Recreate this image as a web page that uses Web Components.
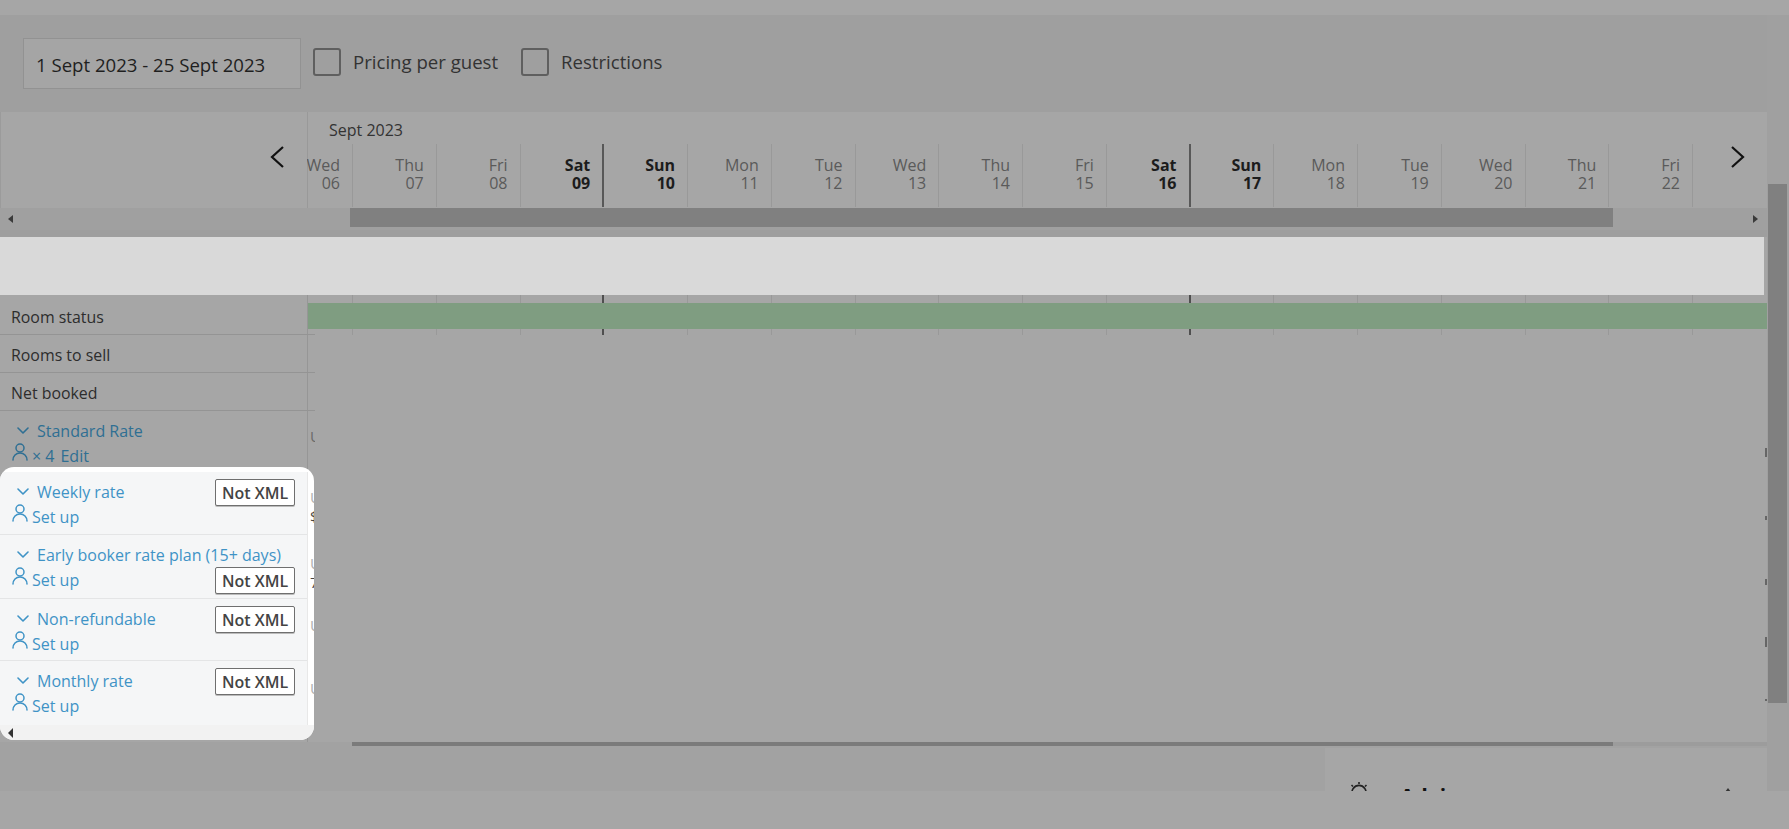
<!DOCTYPE html>
<html lang="en">
<head>
<meta charset="utf-8">
<title>Rates calendar</title>
<style>
  html, body { margin: 0; background: #a6a6a6; }
  body { font-family: "Open Sans", "Liberation Sans", sans-serif; overflow: hidden; }
</style>
</head>
<body>
<rate-page></rate-page>

<script>
// shared column track for everything that lines up with the days
const DAY_TRACK = '46px repeat(16, 83.75px)';
const DAYS = [
  ['Wed','06'],['Thu','07'],['Fri','08'],['Sat','09',1],['Sun','10',1],['Mon','11'],['Tue','12'],
  ['Wed','13'],['Thu','14'],['Fri','15'],['Sat','16',1],['Sun','17',1],['Mon','18'],['Tue','19'],
  ['Wed','20'],['Thu','21'],['Fri','22']
];

const PERSON = `<svg width="16" height="18" viewBox="0 0 16 18" fill="none" stroke="currentColor" stroke-width="1.5" stroke-linecap="round">
  <circle cx="8" cy="5" r="4"/><path d="M1 17c0-4 3-7 7-7s7 3 7 7"/></svg>`;
const CHEVRON = `<svg width="12" height="7" viewBox="0 0 12 7" fill="none" stroke="currentColor" stroke-width="1.6" stroke-linecap="round" stroke-linejoin="round"><path d="M1 1l5 5 5-5"/></svg>`;

class Shadowed extends HTMLElement {
  render(html) {
    this.attachShadow({mode: 'open'}).innerHTML = html;
  }
}

class CalToolbar extends Shadowed {
  constructor() {
    super();
    this.render(`
    <style>
      :host { display: flex; align-items: center; height: 97px; background: #9f9f9f; padding-left: 23px; box-sizing: border-box; color: #2f2f2f; font-size: 18.6px; }
      #range { width: 278px; height: 51px; box-sizing: border-box; border: 1px solid #929292; background: #a5a5a5; display: flex; align-items: center; padding: 2px 0 0 12px; margin-right: 12px; color: #1f1f1f; margin-top: -1px; white-space: nowrap; }
      .check { width: 28px; height: 28px; box-sizing: border-box; border: 2px solid #5f5f5f; border-radius: 3px; margin: -3px 12px 0 0; }
      .label { margin: -4px 23px 0 0; color: #333; white-space: nowrap; }
    </style>
    <div id="range">1 Sept 2023 - 25 Sept 2023</div>
    <div class="check"></div><div class="label">Pricing per guest</div>
    <div class="check"></div><div class="label">Restrictions</div>`);
  }
}

class HScroll extends Shadowed {
  constructor() {
    super();
    this.render(`
    <style>
      :host { display: flex; height: 22px; background: #a0a0a0; align-items: flex-start; }
      #left { width: 350px; height: 22px; box-sizing: border-box; padding: 7px 0 0 8px; }
      #thumb { width: 1263px; height: 19px; background: #808080; }
      #rest { flex: 1; height: 22px; box-sizing: border-box; padding: 7px 9px 0 0; display: flex; justify-content: flex-end; }
      .l { width: 0; height: 0; border: 4.5px solid transparent; border-right: 5px solid #3a3a3a; border-left: 0; }
      .r { width: 0; height: 0; border: 4.5px solid transparent; border-left: 5px solid #3a3a3a; border-right: 0; }
    </style>
    <div id="left"><div class="l"></div></div><div id="thumb"></div><div id="rest"><div class="r"></div></div>`);
  }
}

class CalHeader extends Shadowed {
  constructor() {
    super();
    const cells = DAYS.map(d => `
      <div class="day ${d[2] ? 'we' : ''} ${d[0] === 'Sat' ? 'sat' : ''}"><span>${d[0]}</span><span>${d[1]}</span></div>`).join('');
    this.render(`
    <style>
      :host { display: block; background: #a6a6a6; }
      #top { display: grid; grid-template-columns: 307px 1fr; height: 96px; }
      #side { display: flex; justify-content: flex-end; align-items: flex-start; padding: 33px 22px 0 0; border-left: 1px solid #9b9b9b; box-sizing: border-box; }
      #main { display: flex; flex-direction: column; border-left: 1px solid #999; min-width: 0; position: relative; }
      #month { height: 32px; padding: 8px 0 0 21px; box-sizing: border-box; font-size: 16px; color: #333; line-height: 20px; }
      #days { display: grid; grid-template-columns: ${DAY_TRACK}; height: 63px; margin-left: -1px; }
      .day { display: flex; flex-direction: column; align-items: flex-end; overflow: hidden; box-sizing: border-box; border-right: 1px solid #999; padding: 12px 12px 0 0; font-size: 16px; line-height: 18px; color: #5a5a5a; }
      .we { color: #1c1c1c; font-weight: 700; }
      .sat { border-right: 2px solid #585858; }
      #next { position: absolute; right: 21px; top: 33px; }
      svg { display: block; }
    </style>
    <div id="top">
      <div id="side"><svg width="16" height="24" viewBox="0 0 16 24" fill="none" stroke="#111" stroke-width="2.2"><path d="M14 2L3 12l11 10"/></svg></div>
      <div id="main">
        <div id="month">Sept 2023</div>
        <div id="days">${cells}</div>
        <svg id="next" width="16" height="24" viewBox="0 0 16 24" fill="none" stroke="#111" stroke-width="2.2"><path d="M2 2l11 10L2 22"/></svg>
      </div>
    </div>
    <h-scroll></h-scroll>`);
  }
}

class DayTicks extends Shadowed {
  constructor() {
    super();
    const cells = DAYS.map(d => `<i class="${d[0] === 'Sat' ? 'sat' : ''}"></i>`).join('');
    this.render(`
    <style>
      :host { display: grid; grid-template-columns: ${DAY_TRACK}; }
      i { display: block; box-sizing: border-box; border-right: 1px solid #999; }
      .sat { border-right: 2px solid #4f4f4f; }
    </style>${cells}`);
  }
}

class PlainRow extends Shadowed {
  constructor() {
    super();
    this.render(`
    <style>
      :host { display: flex; align-items: center; box-sizing: border-box; height: var(--h, 38px); padding: var(--pt, 0) 0 0 11px; border-bottom: 1px solid #949494; margin-right: -8px; font-size: 15.9px; color: #2d2d2d; }
    </style>
    <slot></slot>`);
  }
}

class RateRow extends Shadowed {
  constructor() {
    super();
    const badgeLine = this.getAttribute('badge-line');
    const badge = `<div class="badge">Not XML</div>`;
    this.render(`
    <style>
      :host { display: block; box-sizing: border-box; height: var(--h, 63px); padding-top: 7px; border-bottom: 1px solid var(--line, #e4e5e6); color: var(--link, #3f93c6); font-size: 16px; }
      .line { display: flex; align-items: center; height: 25px; padding-left: 12px; padding-right: 12px; white-space: nowrap; }
      .chev { margin: 0 8px 0 5px; display: flex; }
      .who { margin-right: 4px; display: flex; margin-top: -7px; }
      .badge { margin-left: auto; margin-top: 2px; height: 27px; width: 80px; box-sizing: border-box; border: 1px solid #6f6f6f; border-radius: 2px; box-shadow: 0 1px 0 #bbb; background: #fff; color: #444; font-size: 16px; font-weight: 600; display: flex; align-items: center; justify-content: center; flex: none; }
      svg { display: block; }
    </style>
    <div class="line"><span class="chev">${CHEVRON}</span><slot name="title"></slot>${badgeLine === '1' ? badge : ''}</div>
    <div class="line"><span class="who">${PERSON}</span><slot name="action"></slot>${badgeLine === '2' ? badge : ''}</div>`);
  }
}

// the bright cut-out, it sits on top of the dimmed table and sticks out a little
class SpotCard extends Shadowed {
  constructor() {
    super();
    this.render(`
    <style>
      :host { display: block; position: relative; z-index: 2; width: 314px; height: 273px; box-sizing: border-box; padding-top: 5px; background: #fff; border-radius: 14px; overflow: hidden; }
      #rows { width: 307px; border-right: 1px solid #e8e8e8; box-sizing: content-box; background: #f5f6f7; height: 253px; margin-right: 0; }
      #stubs { position: absolute; left: 310px; top: 21px; width: 4px; overflow: hidden; font-size: 15px; line-height: 19px; color: #b0b0b0; }
      #stubs div { height: 62px; }
      #stubs b { font-weight: 400; color: #444; display: block; }
      #foot { height: 15px; background: #f2f2f2; position: relative; display: flex; align-items: center; padding-left: 8px; }
      #foot i { width: 0; height: 0; border: 5px solid transparent; border-right: 5px solid #333; border-left: 0; }
    </style>
    <div id="rows"><slot></slot></div>
    <div id="foot"><i></i></div>
    <div id="stubs"><div style="height:66px">U<b>$</b></div><div>U<b>7</b></div><div style="height:63px">U</div><div>U</div></div>`);
  }
}

class CalBody extends Shadowed {
  constructor() {
    super();
    this.render(`
    <style>
      :host { display: grid; grid-template-columns: 307px 1fr; height: 447px; background: #a6a6a6; }
      #left { border-right: 1px solid #969696; box-sizing: content-box; width: 307px; position: relative; }
      #right { display: flex; flex-direction: column; min-width: 0; }
      #status { display: flex; flex-direction: column; height: 40px; }
      day-ticks.a { height: 8px; }
      day-ticks.b { height: 6px; }
      #green { height: 26px; background: #7f9d81; }
      #rest { flex: 1; display: flex; justify-content: space-between; padding-top: 94px; }
      #stub { font-size: 15px; line-height: 14px; height: 14px; width: 5px; overflow: hidden; color: #6a6a6a; margin-left: 3px; }
      #marks { width: 2px; display: flex; flex-direction: column; }
      #marks i { display: block; background: #666; }
    </style>
    <div id="left"><slot></slot></div>
    <div id="right">
      <div id="status">
        <day-ticks class="a"></day-ticks>
        <div id="green"></div>
        <day-ticks class="b"></day-ticks>
      </div>
      <div id="rest">
        <div id="stub">U</div>
        <div id="marks">
          <i style="height:9px;margin-top:19px"></i>
          <i style="height:4px;margin-top:59px"></i>
          <i style="height:6px;margin-top:59px"></i>
          <i style="height:10px;margin-top:52px"></i>
          <i style="height:2px;margin-top:52px"></i>
        </div>
      </div>
    </div>`);
  }
}

class BottomStrip extends Shadowed {
  constructor() {
    super();
    this.render(`
    <style>
      :host { display: flex; flex-direction: column; flex: 1; min-height: 0; background: #a2a2a2; overflow: hidden; }
      #bar { height: 4px; display: flex; padding-left: 352px; flex: none; }
      #bar i { display: block; width: 1261px; background: #7b7b7b; }
      #bar u { display: block; flex: 1; background: #9c9c9c; }
      #row { flex: 1; display: flex; padding: 2px 0 0 1325px; min-height: 0; }
      #panel { flex: 1; background: #a6a6a6; height: 60px; box-sizing: border-box; padding: 33px 0 0 24px; display: flex; align-items: flex-start; color: #111; }
      #name { font-size: 21px; font-weight: 700; margin-left: 31px; line-height: 24px; margin-top: 3px; }
      #up { margin-left: auto; margin-right: 33px; margin-top: 7px; }
    </style>
    <div id="bar"><i></i><u></u></div>
    <div id="row">
      <div id="panel">
        <svg width="20" height="20" viewBox="0 0 20 20" fill="none" stroke="#222" stroke-width="1.6"><path d="M10 1v2M2.5 4l1.5 1.5M17.5 4L16 5.500M3.500 14a7 7 0 1 1 13 0"/></svg>
        <div id="name">Advice</div>
        <svg id="up" width="12" height="8" viewBox="0 0 12 8" fill="#333"><path d="M6 0l6 8H0z"/></svg>
      </div>
    </div>`);
  }
}

class VScroll extends Shadowed {
  constructor() {
    super();
    this.render(`
    <style>
      :host { display: block; width: 22px; background: #a0a0a0; box-sizing: border-box; padding: 169px 2px 0 1px; }
      div { height: 519px; background: #808080; }
    </style>
    <div></div>`);
  }
}

class RatePage extends Shadowed {
  constructor() {
    super();
    this.render(`
    <style>
      :host { display: flex; flex-direction: column; width: 1789px; height: 829px; background: #a6a6a6; overflow: hidden; }
      #top { height: 15px; flex: none; }
      #mid { display: flex; height: 776px; flex: none; }
      #content { width: 1767px; display: flex; flex-direction: column; }
      #foot { height: 38px; flex: none; }
      #gap { height: 7px; background: #9e9e9e; flex: none; }
      #band { height: 58px; background: #d9d9d9; flex: none; margin-right: 3px; }
      .dim { --link: #2f6f93; --line: #949494; }
      .dim-row { height: 56px; overflow: hidden; margin-right: -8px; }
      .x { margin-right: 6px; }
    </style>
    <div id="top"></div>
    <div id="mid">
      <div id="content">
        <cal-toolbar></cal-toolbar>
        <cal-header></cal-header>
        <div id="gap"></div>
        <div id="band"></div>
        <cal-body>
          <plain-row style="--h:40px;--pt:4px">Room status</plain-row>
          <plain-row style="--pt:2px">Rooms to sell</plain-row>
          <plain-row style="--pt:2px">Net booked</plain-row>
          <div class="dim dim-row">
            <rate-row style="--h:56px;border:0">
              <span slot="title">Standard Rate</span>
              <span slot="action"><span class="x">× 4</span>Edit</span>
            </rate-row>
          </div>
          <spot-card>
            <rate-row badge-line="1" style="--h:63px"><span slot="title">Weekly rate</span><span slot="action">Set up</span></rate-row>
            <rate-row badge-line="2" style="--h:64px"><span slot="title">Early booker rate plan (15+ days)</span><span slot="action">Set up</span></rate-row>
            <rate-row badge-line="1" style="--h:62px"><span slot="title">Non-refundable</span><span slot="action">Set up</span></rate-row>
            <rate-row badge-line="1" style="--h:64px;--line:transparent"><span slot="title">Monthly rate</span><span slot="action">Set up</span></rate-row>
          </spot-card>
        </cal-body>
        <bottom-strip></bottom-strip>
      </div>
      <v-scroll></v-scroll>
    </div>
    <div id="foot"></div>`);
  }
}

customElements.define('cal-toolbar', CalToolbar);
customElements.define('h-scroll', HScroll);
customElements.define('cal-header', CalHeader);
customElements.define('day-ticks', DayTicks);
customElements.define('plain-row', PlainRow);
customElements.define('rate-row', RateRow);
customElements.define('spot-card', SpotCard);
customElements.define('cal-body', CalBody);
customElements.define('bottom-strip', BottomStrip);
customElements.define('v-scroll', VScroll);
customElements.define('rate-page', RatePage);
</script>
</body>
</html>
